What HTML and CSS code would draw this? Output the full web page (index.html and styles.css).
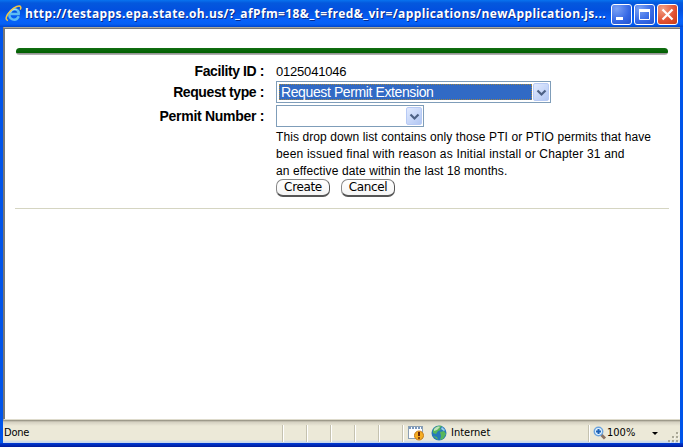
FILE: index.html
```html
<!DOCTYPE html>
<html lang="en">
<head>
<meta charset="utf-8">
<title>New Application</title>
<link rel="stylesheet" href="styles.css">
</head>
<body>
<div class="window">
  <header class="titlebar">
    <svg class="ie" width="17" height="17" viewBox="0 0 17 17" fill="none">
      <path d="M13.8 11.3C12.5 14 9.8 15.2 7.4 14.4C4.6 13.4 3.8 10.6 4.9 7.8C6 5.1 8.8 3.7 11.3 4.6C13.3 5.3 14 7 13.7 9H5.5" stroke="#5dbcf2" stroke-width="2.5"/>
      <path d="M5.3 7.5C6.7 4.7 9.3 3.6 11.7 4.7" stroke="#b8e9ff" stroke-width="1"/>
      <path d="M3 15.5C-.5 15 1.4 9.8 5.6 5.7C9.5 1.8 14.8-.2 15.7 2C16 2.8 15.7 3.8 15.2 4.7" stroke="#f2c648" stroke-width="1.5"/>
    </svg>
    <span class="caption">http://testapps.epa.state.oh.us/?_afPfm=18&amp;_t=fred&amp;_vir=/applications/newApplication.js...</span>
    <div class="controls">
      <span class="control"><svg width="19" height="19"><path d="M4 13.5h7" stroke="#fff" stroke-width="3"/></svg></span>
      <span class="control"><svg width="19" height="19" fill="none" stroke="#fff"><path d="M4.5 5v9.5h10V5" /><path d="M4 5.5h11" stroke-width="3"/></svg></span>
      <span class="control close"><svg width="19" height="19"><path d="M4.5 4.5l10 10m0-10l-10 10" stroke="#fff" stroke-width="2.2"/></svg></span>
    </div>
  </header>
  <main class="page">
    <div class="rule"></div>
    <div class="form">
      <div class="label">Facility ID :</div><div class="value">0125041046</div>
      <div class="label">Request type :</div>
      <div class="select type"><span class="selected"><span>Request Permit Extension</span></span><span class="arrow"><svg width="16" height="19"><path d="M4.5 7.5l4 4 4-4" fill="none" stroke="#4d6185" stroke-width="2.2"/></svg></span></div>
      <div class="label number">Permit Number :</div>
      <div class="select permit"><span class="arrow"><svg width="16" height="19"><path d="M4.5 7.5l4 4 4-4" fill="none" stroke="#4d6185" stroke-width="2.2"/></svg></span></div>
      <div class="details">
        <p><span class="line one">This drop down list contains only those PTI or PTIO permits that have</span><span class="line two">been issued final with reason as Initial install or Chapter 31 and</span><span class="line three">an effective date within the last 18 months.</span></p>
        <div class="actions"><button>Create</button><button>Cancel</button></div>
      </div>
    </div>
    <div class="divider"></div>
  </main>
  <footer class="status">
    <span class="done">Done</span>
    <span class="pane"></span><span class="pane"></span><span class="pane"></span><span class="pane"></span><span class="pane"></span>
    <span class="pane blocked"><svg width="18" height="17"><rect x="1.5" y="1.5" width="14" height="12" fill="#fff" stroke="#8b9fb3"/><path d="M2 3h13" stroke="#7897bd" stroke-width="2" stroke-dasharray="2 1"/><circle cx="12" cy="10.5" r="4.5" fill="#f6ae22" stroke="#c77b18"/><path d="M12 7v4m0 1.2v1.5" stroke="#6a2809" stroke-width="2"/></svg></span>
    <span class="zone"><svg width="16" height="16" viewBox="0 0 16 16"><circle cx="8" cy="8" r="7.5" fill="#2878b9"/><path d="M2 5C4 1 8 0 11 1L9 3 10 5 7 6 5 9 2 8zM9 7l4-1 2 3-3 5-3 1 1-4zM2 11l4 1 1 3z" fill="#57b65a"/><path d="M3 4C5 2 7 1 9 2L6 5 3 6z" fill="#c1e2bb"/><path d="M11 2l3 3-1 1-3-2z" fill="#9bd1ed"/></svg><span>Internet</span></span>
    <span class="zoom"><svg width="14" height="15"><path d="M8 8.5l4 4" stroke="#8b7464" stroke-width="3"/><circle cx="5.5" cy="5.5" r="4.2" fill="#e5f5ff" stroke="#6ba2dc" stroke-width="1.5"/><path d="M3 5.5h5M5.5 3v5" stroke="#1c61b5" stroke-width="2"/></svg><span>100%</span><i class="caret"></i></span>
    <svg class="grip" width="12" height="12"><path d="M9 2h2M5 6h2m2 0h2M1 10h2m2 0h2m2 0h2" stroke="#aaa897" stroke-width="2"/><path d="M11 3h1M7 7h1m3 0h1M3 11h1m3 0h1m3 0h1" stroke="#fff"/></svg>
  </footer>
</div>
</body>
</html>
```

FILE: styles.css
```css
* { box-sizing: border-box; }
body { margin: 0; font-family: "Liberation Sans", Arial, sans-serif; color: #000; }
.window { width: 683px; height: 447px; display: flex; flex-direction: column; overflow: hidden; padding: 0 3px 4px; background: linear-gradient(#0054e9 0 443px, #003bd5 443px, #001999); }
.titlebar { height: 27px; flex: none; display: flex; align-items: center; margin: 0 -3px; padding: 0 3px 0 5px; background: linear-gradient(#0873ef 0, #0458dd 3px, #0250df 10px, #0761fa 20px, #0560f5 24px, #0146cd 27px); }
.ie { flex: none; margin-right: 3px; }
.caption { width: 586px; flex: none; white-space: nowrap; color: #fff; font: bold 12px/27px "Open Sans", sans-serif; letter-spacing: .385px; text-shadow: 1px 1px #082a8a; }
.controls { display: flex; gap: 2px; margin-top: 1px; }
.control { width: 21px; height: 21px; border: 1px solid #fff; border-radius: 3px; background: radial-gradient(circle at 25% 20%, #7ba2f5, #3568e5 60%, #2253ce); }
.control svg { display: block; }
.close { background: radial-gradient(circle at 25% 20%, #f2a084, #e15031 60%, #c73c13); }
.page { flex: 1; background: #fff; border: 1px solid #aca899; border-left-color: #777; border-right: 0; border-bottom: 1px solid #dedbcc; padding: 20px 11px 0 11px; box-shadow: inset 1px 1px #777; }
.rule { height: 7px; margin-right: 1px; margin-left: 1px; border-radius: 4px; background: linear-gradient(#126e12 0, #005f00 5px, #888 5px, #bbb 7px); }
.form { display: grid; grid-template-columns: 249px 376px; grid-template-rows: 19px 24px 23px auto; column-gap: 12px; padding-top: 7px; }
.label { text-align: right; font: bold 14px/19px "Liberation Sans", sans-serif; letter-spacing: -.4px; white-space: nowrap; }
.label:nth-of-type(3), .label:nth-of-type(5) { line-height: 23px; }
.number { letter-spacing: -.3px; }
.value { font-size: 13px; line-height: 19px; letter-spacing: -.2px; }
.select { height: 22px; border: 1px solid #7f9db9; padding: 1px; display: flex; justify-content: space-between; background: #fff; }
.type { width: 275px; }
.permit { width: 148px; justify-content: flex-end; }
.selected { width: 253px; margin: 1px; background: #316ac5; border: 1px dotted #9d8548; color: #fff; font-size: 14px; line-height: 15px; letter-spacing: -.39px; padding-left: 1px; white-space: nowrap; }
.arrow { width: 16px; height: 18px; border: 1px solid #b7caf5; border-radius: 2px; background: linear-gradient(135deg, #e1eaff, #b2c7f3); }
.arrow svg { display: block; margin: -1px; }
.details { grid-column: 2; }
p { margin: 0; padding-top: 1px; font-size: 12px; line-height: 17px; }
.line { display: block; white-space: nowrap; }
.one { letter-spacing: .09px; }
.two { letter-spacing: .19px; }
.three { letter-spacing: .11px; }
.actions { display: flex; gap: 11px; margin-top: -1px; }
button { width: 54px; height: 18px; padding: 0; border: 1px solid #888; border-bottom: 2px solid #555; border-right-color: #555; border-radius: 7px; background: linear-gradient(#fff, #f5f5f5); color: #000; font: 12px/15px "DejaVu Sans", sans-serif; letter-spacing: -.35px; }
.divider { height: 1px; margin-top: 11px; background: #d5d5c2; }
.status { height: 23px; flex: none; display: flex; align-items: center; background: linear-gradient(#8b8878 0, #d4d0c1 2px, #ece9d8 6px, #ece9d8 20px, #c8d7ec 22px); font: 11px/20px "DejaVu Sans Condensed", "DejaVu Sans", sans-serif; padding-top: 3px; }
.done { width: 279px; padding-left: 1px; letter-spacing: -.2px; }
.pane { width: 24px; height: 17px; border-left: 1px solid #c5c2b0; box-shadow: inset 1px 0 #fff; }
.blocked { width: 29px; padding-left: 4px; }
.blocked svg { display: block; }
.zone { display: flex; width: 157px; gap: 4px; align-items: center; }
.zoom { display: flex; height: 17px; align-items: center; border-left: 1px solid #c5c2b0; box-shadow: inset 1px 0 #fff; padding-left: 4px; width: 79px; }
.caret { border: 3px solid transparent; border-top-color: #000; border-bottom: 0; margin-left: 17px; }
.grip { align-self: flex-end; }
```
